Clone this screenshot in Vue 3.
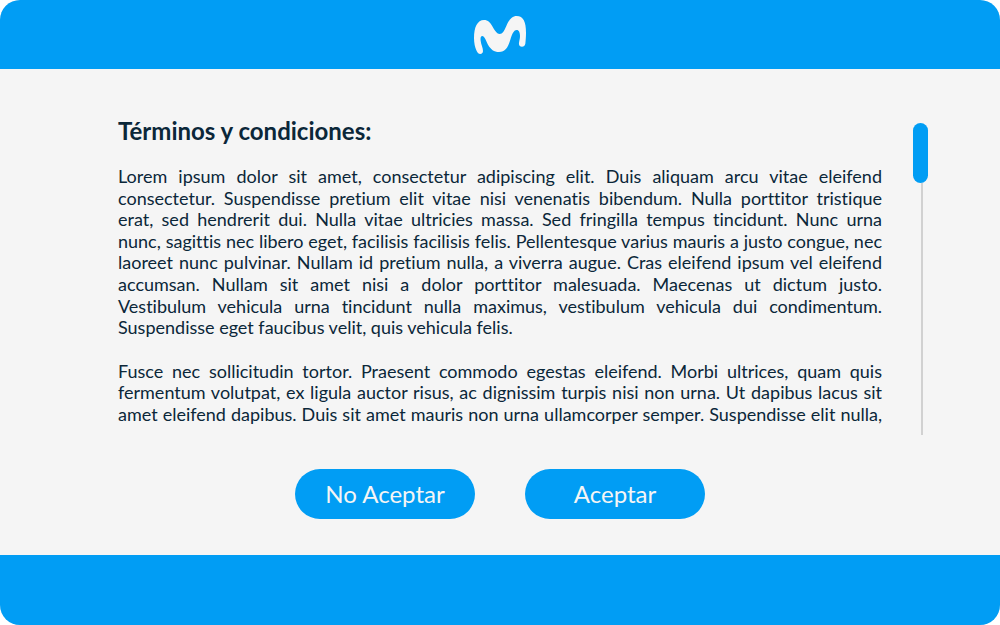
<script setup>
const paragraphs = [
  [
    'Lorem ipsum dolor sit amet, consectetur adipiscing elit. Duis aliquam arcu vitae eleifend',
    'consectetur. Suspendisse pretium elit vitae nisi venenatis bibendum. Nulla porttitor tristique',
    'erat, sed hendrerit dui. Nulla vitae ultricies massa. Sed fringilla tempus tincidunt. Nunc urna',
    'nunc, sagittis nec libero eget, facilisis facilisis felis. Pellentesque varius mauris a justo congue, nec',
    'laoreet nunc pulvinar. Nullam id pretium nulla, a viverra augue. Cras eleifend ipsum vel eleifend',
    'accumsan. Nullam sit amet nisi a dolor porttitor malesuada. Maecenas ut dictum justo.',
    'Vestibulum vehicula urna tincidunt nulla maximus, vestibulum vehicula dui condimentum.',
    'Suspendisse eget faucibus velit, quis vehicula felis.',
  ],
  [
    'Fusce nec sollicitudin tortor. Praesent commodo egestas eleifend. Morbi ultrices, quam quis',
    'fermentum volutpat, ex ligula auctor risus, ac dignissim turpis nisi non urna. Ut dapibus lacus sit',
    'amet eleifend dapibus. Duis sit amet mauris non urna ullamcorper semper. Suspendisse elit nulla,',
  ],
]
const isShort = (line) => line.endsWith('felis.')
</script>

<template>
  <div class="screen">
    <header class="bar top">
      <svg class="logo" viewBox="42 33 156 114" role="img" aria-label="Movistar">
        <path d="M61 147C55 147 52 143 49 136C45 127 42 114 42 99C42 67 52 45 72 45C84 45 91 53 97 64C105 78 111 87 119 87C128 87 132 79 139 63C147 45 156 33 170 33C190 33 198 50 198 84C198 94 197 107 196 116C195 122 191 125 186 125C180 125 176 121 177 114C178 107 180 101 180 93C180 83 177 75 170 75C162 75 157 85 151 104C144 127 136 141 117 141C102 141 92 133 84 119C77 105 73 93 67 93C62 93 61 99 62 107C63 118 69 128 69 138C69 143 66 147 61 147Z" />
      </svg>
    </header>

    <main class="content">
      <div class="terms">
        <section id="terms-text" class="text" tabindex="0" aria-labelledby="terms-title">
          <h1 id="terms-title">Términos y condiciones:</h1>
          <p v-for="(lines, i) in paragraphs" :key="i">
            <span v-for="line in lines" :key="line" class="line" :class="{ short: isShort(line) }">{{ line }}</span>
          </p>
        </section>
        <div class="scrollbar" role="scrollbar" aria-controls="terms-text" aria-orientation="vertical" aria-valuenow="0">
          <div class="thumb"></div>
          <div class="track"></div>
        </div>
      </div>
      <div class="actions">
        <button type="button">No Aceptar</button>
        <button type="button">Aceptar</button>
      </div>
    </main>

    <footer class="bar bottom"></footer>
  </div>
</template>

<style>
body {
  margin: 0;
  background: #fff;
}
</style>

<style scoped>
.screen {
  display: flex;
  flex-direction: column;
  min-height: 100vh;
  overflow: hidden;
  border-radius: 20px;
  background: #f5f5f5;
  color: #0b2739;
  font-family: Lato, "Noto Sans", sans-serif;
  font-variant-ligatures: none;
}
.bar {
  display: flex;
  justify-content: center;
  align-items: center;
  background: #019df4;
}
.top {
  height: 69px;
}
.bottom {
  height: 70px;
}
.logo {
  width: 52px;
  height: 38px;
  fill: #f5f5f5;
}
.content {
  flex: 1;
  padding: 47px 72px 36px 118px;
}
.terms {
  display: flex;
  gap: 31px;
}
.text {
  flex: 1;
  outline: none;
}
h1 {
  margin: 0 0 20px;
  font-size: 24px;
  line-height: 30px;
  font-weight: 700;
}
p {
  margin: 0 0 22px;
  font-size: 18px;
  line-height: 1.2;
}
p:last-child {
  margin-bottom: 0;
}
.line {
  display: block;
  text-align: justify;
  text-align-last: justify;
}
.short {
  text-align-last: left;
}
.scrollbar {
  display: flex;
  flex-direction: column;
  align-items: center;
  width: 15px;
  height: 312px;
  margin-top: 7px;
}
.thumb {
  width: 15px;
  height: 60px;
  border-radius: 8px;
  background: #019df4;
}
.track {
  flex: 1;
  width: 2px;
  margin-left: 2px;
  background: #d1d1d1;
}
.actions {
  display: flex;
  justify-content: center;
  gap: 50px;
  margin: 34px 46px 0 0;
}
button {
  width: 180px;
  height: 50px;
  padding: 0 0 2px;
  border: 0;
  border-radius: 25px;
  background: #019df4;
  color: #f5f5f5;
  font: 400 24px Lato, "Noto Sans", sans-serif;
  cursor: pointer;
}
</style>
